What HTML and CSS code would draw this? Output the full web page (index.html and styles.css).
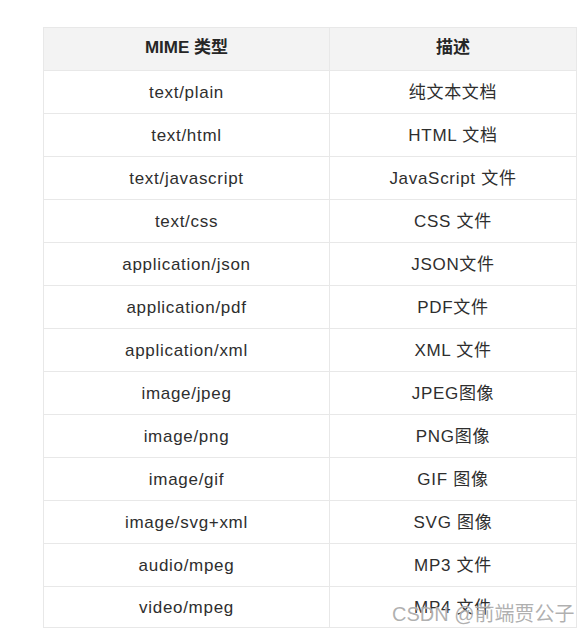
FILE: index.html
```html
<!DOCTYPE html>
<html lang="zh">
<head>
<meta charset="utf-8">
<link rel="stylesheet" href="styles.css">
</head>
<body>
<div class="page">
  <table class="mime">
    <thead>
      <tr><th>MIME 类型</th><th>描述</th></tr>
    </thead>
    <tbody>
      <tr><td>text/plain</td><td>纯文本文档</td></tr>
      <tr><td>text/html</td><td>HTML 文档</td></tr>
      <tr><td>text/javascript</td><td>JavaScript 文件</td></tr>
      <tr><td>text/css</td><td>CSS 文件</td></tr>
      <tr><td>application/json</td><td>JSON文件</td></tr>
      <tr><td>application/pdf</td><td>PDF文件</td></tr>
      <tr><td>application/xml</td><td>XML 文件</td></tr>
      <tr><td>image/jpeg</td><td>JPEG图像</td></tr>
      <tr><td>image/png</td><td>PNG图像</td></tr>
      <tr><td>image/gif</td><td>GIF 图像</td></tr>
      <tr><td>image/svg+xml</td><td>SVG 图像</td></tr>
      <tr><td>audio/mpeg</td><td>MP3 文件</td></tr>
      <tr class="last"><td>video/mpeg</td><td>MP4 文件</td></tr>
    </tbody>
  </table>
  <div class="watermark">CSDN @前端贾公子</div>
</div>
</body>
</html>
```
FILE: styles.css
```css
html, body {
  margin: 0;
  padding: 0;
  background: #ffffff;
}
.page {
  position: relative;
  width: 584px;
  height: 632px;
  padding: 27px 0 0 43px;
  box-sizing: border-box;
  font-family: "Liberation Sans", "Noto Sans CJK SC", sans-serif;
  color: #2e2e2e;
}
.mime {
  border-collapse: collapse;
  width: 534px;
  table-layout: fixed;
  font-size: 17px;
  line-height: 18px;
}
.mime th, .mime td {
  border: 1px solid #e8e8e8;
  text-align: center;
  vertical-align: middle;
  padding: 0;
  height: 43px;
  box-sizing: border-box;
}
.mime td {
  letter-spacing: 0.7px;
  padding-top: 1px;
}
.mime th:first-child, .mime td:first-child {
  width: 286px;
}
.mime th {
  background: #f3f3f3;
  font-weight: bold;
  color: #262626;
  padding-bottom: 2px;
}
.mime tr.last td {
  height: 41px;
}
.watermark {
  position: absolute;
  left: 392px;
  top: 602px;
  font-size: 20px;
  line-height: 24px;
  color: rgba(150, 150, 150, 0.75);
  text-shadow: 0 0 1px rgba(255, 255, 255, 0.9);
  white-space: nowrap;
}
```
